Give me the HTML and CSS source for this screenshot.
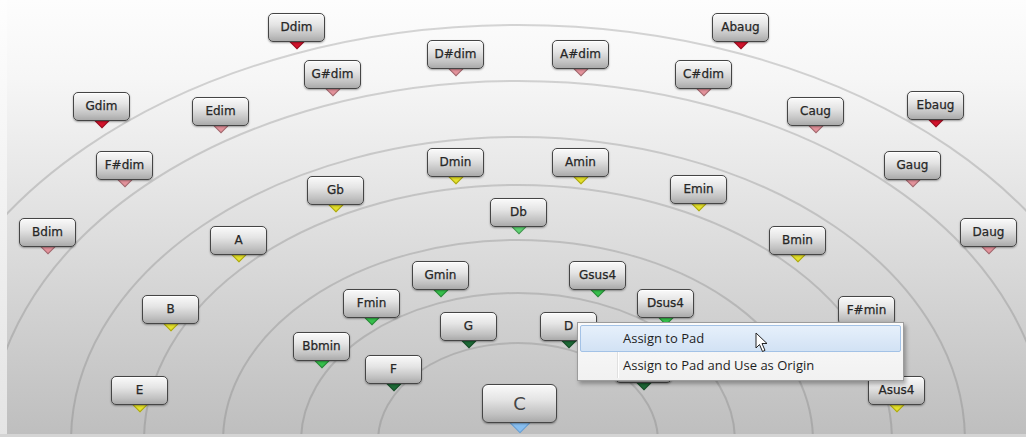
FILE: index.html
```html
<!DOCTYPE html>
<html lang="en">
<head>
    <meta charset="UTF-8">
    <title>Chord Assistant</title>
    <link rel="stylesheet" href="styles.css">
</head>
<body>
    <div class="board" id="board">
        <svg class="arcs" width="1026" height="437" viewBox="0 0 1026 437">
            <g fill="none" stroke="rgba(110,110,110,0.28)" stroke-width="2">
                <ellipse cx="518" cy="441" rx="140" ry="98"/>
                <ellipse cx="518" cy="441" rx="217" ry="148"/>
                <ellipse cx="518" cy="441" rx="295" ry="201"/>
                <ellipse cx="518" cy="441" rx="374" ry="256"/>
                <ellipse cx="518" cy="441" rx="447" ry="304"/>
                <ellipse cx="518" cy="441" rx="529" ry="360"/>
                <ellipse cx="518" cy="441" rx="610" ry="416"/>
            </g>
        </svg>

        <div class="menu">
            <div class="menu-item active">Assign to Pad</div>
            <div class="menu-item">Assign to Pad and Use as Origin</div>
        </div>

        <svg class="cursor" width="14" height="21" viewBox="0 0 14 21">
            <path d="M1 1 L1 16 L4.5 12.5 L7.5 19.5 L10 18.4 L7 11.5 L12 11.5 Z" fill="#fff" stroke="#222" stroke-width="1" stroke-linejoin="round"/>
        </svg>
    </div>

    <script>
        // chord pads: label, left, top, tip colour (size "big" for the origin)
        const pads = [
            ['Ddim', 268, 13, 'red'],
            ['Abaug', 712, 13, 'red'],
            ['D#dim', 427, 40, 'pink'],
            ['A#dim', 552, 40, 'pink'],
            ['G#dim', 304, 60, 'pink'],
            ['C#dim', 675, 60, 'pink'],
            ['Gdim', 73, 92, 'red'],
            ['Edim', 192, 97, 'pink'],
            ['Caug', 787, 97, 'pink'],
            ['Ebaug', 907, 91, 'red'],
            ['F#dim', 96, 151, 'pink'],
            ['Dmin', 427, 148, 'yellow'],
            ['Amin', 552, 148, 'yellow'],
            ['Gaug', 884, 151, 'pink'],
            ['Gb', 307, 176, 'yellow'],
            ['Emin', 670, 175, 'yellow'],
            ['Db', 490, 198, 'lime'],
            ['Bdim', 19, 218, 'pink'],
            ['A', 210, 226, 'yellow'],
            ['Bmin', 769, 226, 'yellow'],
            ['Daug', 960, 218, 'pink'],
            ['Gmin', 412, 261, 'green'],
            ['Gsus4', 569, 261, 'green'],
            ['Fmin', 343, 289, 'green'],
            ['Dsus4', 637, 289, 'green'],
            ['F#min', 838, 296, 'yellow'],
            ['B', 142, 295, 'yellow'],
            ['G', 440, 312, 'dark'],
            ['D', 540, 312, 'dark'],
            ['Bbmin', 293, 332, 'green'],
            ['', 615, 354, 'dark'],
            ['F', 365, 355, 'dark'],
            ['E', 111, 376, 'yellow'],
            ['Asus4', 868, 376, 'yellow'],
            ['C', 482, 384, 'blue', 'big']
        ];

        const board = document.getElementById('board');
        const menu = board.querySelector('.menu');

        pads.forEach(function(p) {
            const big = p[4] === 'big';
            const w = big ? 75 : 57;
            const h = big ? 39 : 29;
            const t = big ? 16 : 12;

            const tip = document.createElement('div');
            tip.className = 'tip tip-' + p[3] + (big ? ' tip-big' : '');
            tip.style.left = (p[1] + w / 2 - t / 2) + 'px';
            tip.style.top = (p[2] + h - t / 2 - 1) + 'px';

            const pad = document.createElement('div');
            pad.className = big ? 'pad pad-big' : 'pad';
            pad.style.left = p[1] + 'px';
            pad.style.top = p[2] + 'px';
            pad.textContent = p[0];

            board.insertBefore(tip, menu);
            board.insertBefore(pad, menu);
        });
    </script>
</body>
</html>
```

FILE: styles.css
```css
* {
    margin: 0;
    padding: 0;
    box-sizing: border-box;
}

body {
    background: #f3f3f3;
    overflow: hidden;
}

.board {
    position: relative;
    width: 1026px;
    height: 437px;
    overflow: hidden;
    background: linear-gradient(180deg, #fdfdfd 0%, #f6f6f6 18%, #e6e6e6 42%, #d6d6d6 65%, #c6c6c6 88%, #bebebe 100%);
}

/* light frame strip on the left and bottom */
.board::before {
    content: "";
    position: absolute;
    left: 0;
    top: 0;
    width: 7px;
    height: 100%;
    background: linear-gradient(180deg, #fefefe, #e4e4e4);
    z-index: 5;
}

.board::after {
    content: "";
    position: absolute;
    left: 0;
    bottom: 0;
    width: 100%;
    height: 3px;
    background: #d4d4d4;
    z-index: 5;
}

.arcs {
    position: absolute;
    left: 0;
    top: 0;
}

.pad {
    position: absolute;
    width: 57px;
    height: 29px;
    border: 1.5px solid #454545;
    border-radius: 5px;
    background: linear-gradient(180deg, #fafafa 0%, #e4e4e4 40%, #c0c0c0 80%, #aaaaaa 100%);
    box-shadow: 0 1px 2px rgba(0, 0, 0, 0.35), inset 0 1px 0 #ffffff;
    display: flex;
    align-items: center;
    justify-content: center;
    font-family: "DejaVu Sans", sans-serif;
    font-size: 12px;
    color: #262626;
    -webkit-text-stroke: 0.25px #262626;
    padding-bottom: 1px;
}

.pad-big {
    width: 75px;
    height: 39px;
    font-size: 18px;
    color: #454545;
    -webkit-text-stroke: 0;
    border-radius: 6px;
}

.tip {
    position: absolute;
    width: 12px;
    height: 12px;
    transform: rotate(45deg);
    border: 1px solid rgba(0, 0, 0, 0.3);
}

.tip-big {
    width: 16px;
    height: 16px;
}

.tip-red {
    background: #d4132c;
}

.tip-pink {
    background: #e3929b;
}

.tip-yellow {
    background: #e4e02a;
    border-color: #a8a414;
}

.tip-lime {
    background: #5fd272;
}

.tip-green {
    background: #36c04c;
}

.tip-dark {
    background: #1d6a36;
}

.tip-blue {
    background: #87bef0;
    border-color: #6a9ccc;
}

.menu {
    position: absolute;
    left: 577px;
    top: 322px;
    width: 327px;
    height: 59px;
    padding: 2px;
    background: linear-gradient(180deg, #fbfbfb, #f1f1f1);
    border: 1px solid #9c9c9c;
    box-shadow: 2px 3px 4px rgba(0, 0, 0, 0.3);
    z-index: 10;
    font-family: "Open Sans", sans-serif;
    font-size: 13px;
    color: #1e1e1e;
}

/* icon gutter separator */
.menu::before {
    content: "";
    position: absolute;
    left: 39px;
    top: 2px;
    bottom: 2px;
    width: 1px;
    background: #e0e0e0;
    border-right: 1px solid #ffffff;
}

.menu-item {
    position: relative;
    height: 27px;
    line-height: 25px;
    padding-left: 42px;
    border: 1px solid transparent;
    border-radius: 2px;
}

.menu-item.active {
    background: linear-gradient(180deg, #e6f0fb, #d2e2f4);
    border-color: #a3c2e6;
}

.cursor {
    position: absolute;
    left: 755px;
    top: 332px;
    z-index: 11;
}
```
